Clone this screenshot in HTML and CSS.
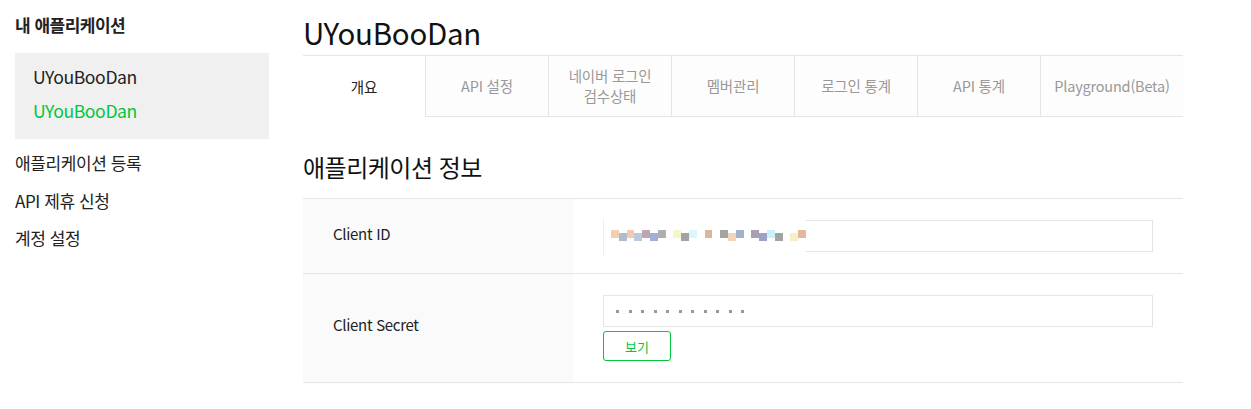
FILE: index.html
```html
<!DOCTYPE html>
<html lang="ko">
<head>
<meta charset="utf-8">
<title>내 애플리케이션</title>
<link rel="stylesheet" href="styles.css">
</head>
<body>
<div class="page">
  <aside class="side">
    <h2 class="side-title">내 애플리케이션</h2>
    <div class="app-box">
      <div class="app-item">UYouBooDan</div>
      <div class="app-item active">UYouBooDan</div>
    </div>
    <ul class="side-links">
      <li>애플리케이션 등록</li>
      <li>API 제휴 신청</li>
      <li>계정 설정</li>
    </ul>
  </aside>
  <main class="main">
    <h1 class="app-title">UYouBooDan</h1>
    <ul class="tabs">
      <li class="tab on">개요</li>
      <li class="tab">API 설정</li>
      <li class="tab">네이버 로그인<br>검수상태</li>
      <li class="tab">멤버관리</li>
      <li class="tab">로그인 통계</li>
      <li class="tab">API 통계</li>
      <li class="tab last">Playground(Beta)</li>
    </ul>
    <h2 class="sec-title">애플리케이션 정보</h2>
    <div class="info">
      <div class="row row-id">
        <div class="label">Client ID</div>
        <div class="value">
          <div class="field">
            <div class="redact">
              <i style="background:#f2c9a6"></i><i style="background:#a8b4c8"></i><i style="background:#f0c8a4"></i><i style="background:#b6c2de"></i><i style="background:#b69ca4"></i><i style="background:#96a8d0"></i><i style="background:#a5a5a5"></i><i style="background:#fff"></i><i style="background:#f6f4c8"></i><i style="background:#999"></i><i style="background:#d8f6f8"></i><i style="background:#fff"></i><i style="background:#d8b090"></i><i style="background:#fff"></i><i style="background:#9a9a9a"></i><i style="background:#f2d0b0"></i><i style="background:#9aa8c6"></i><i style="background:#fff"></i><i style="background:#a096b0"></i><i style="background:#9098c0"></i><i style="background:#c4eefc"></i><i style="background:#999"></i><i style="background:#fff"></i><i style="background:#f6ecc0"></i><i style="background:#e0b090"></i>
            </div>
          </div>
        </div>
      </div>
      <div class="row row-secret">
        <div class="label">Client Secret</div>
        <div class="value">
          <div class="field dots">
            <span></span><span></span><span></span><span></span><span></span><span></span><span></span><span></span><span></span><span></span><span></span>
          </div>
          <button class="btn">보기</button>
        </div>
      </div>
    </div>
  </main>
</div>
</body>
</html>
```
FILE: styles.css
```css
* { box-sizing: border-box; }
html, body { margin: 0; padding: 0; background: #fff; }
body {
  font-family: "Noto Sans CJK KR", "Noto Sans", sans-serif;
  color: #222;
}
ul { list-style: none; margin: 0; padding: 0; }
h1, h2 { margin: 0; font-weight: normal; }

.page { display: flex; padding-left: 15px; }

.side { width: 254px; flex: none; padding-top: 12px; }
.side-title {
  font-size: 17px; font-weight: bold; line-height: 26px; height: 41px;
  color: #222; letter-spacing: -0.5px;
}
.app-box {
  background: #f0f0f0; padding: 7px 18px 0; height: 86px;
}
.app-item { font-size: 17.6px; line-height: 34px; color: #222; letter-spacing: -0.4px; }
.app-item.active { color: #00c73c; }
.side-links { padding-top: 5px; }
.side-links li { font-size: 17px; line-height: 37.5px; color: #222; letter-spacing: -0.4px; }

.main { margin-left: 34px; width: 880px; padding-top: 12px; }
.app-title { font-size: 29.5px; line-height: 40px; height: 43px; color: #111; letter-spacing: -0.3px; }

.tabs {
  display: flex; border-top: 1px solid #e5e5e5; height: 62px;
}
.tab {
  width: 123px; flex: none; height: 61px; display: flex; align-items: center; justify-content: center;
  text-align: center; font-size: 14.5px; line-height: 20px; color: #999; letter-spacing: -0.2px;
  background: #fdfdfd; border-left: 1px solid #e5e5e5; border-bottom: 1px solid #e5e5e5;
}
.tab.on { width: 122px; border-left: 0; border-bottom: 0; background: #fff; color: #222; }
.tab.last { flex: 1; }

.sec-title { font-size: 24px; line-height: 34px; margin-top: 33px; height: 48px; color: #111; letter-spacing: -0.5px; }

.info { border-top: 1px solid #e5e5e5; }
.row { display: flex; border-bottom: 1px solid #e5e5e5; }
.row-id { height: 75px; }
.row-secret { height: 109px; }
.label {
  width: 270px; flex: none; background: #fafafa; padding-left: 30px;
  display: flex; align-items: center; font-size: 15px; color: #222; letter-spacing: -0.3px;
}
.row-id .label { padding-bottom: 6px; }
.row-secret .label { padding-bottom: 8px; }
.value { flex: 1; padding: 21px 0 0 30px; }
.field {
  width: 550px; height: 32px; border: 1px solid #e5e5e5; background: #fff; position: relative;
}
.redact {
  position: absolute; left: -1px; top: -2px; width: 203px; height: 36px; background: #fff;
  display: flex; align-items: center; padding-left: 7px; border-left: 1px solid #eee;
}
.redact i { display: block; width: 8px; height: 8px; opacity: 0.9; }
.redact i:nth-child(odd) { transform: translateY(-3px); }
.dots { display: flex; align-items: center; gap: 9.5px; padding-left: 12px; }
.dots span { width: 3px; height: 3px; background: #999; display: block; }
.btn {
  display: block; margin-top: 4px; width: 68px; height: 30px; border: 1px solid #00c73c; border-radius: 3px;
  background: #fff; color: #00c73c; font-family: inherit; font-size: 13px; padding: 0;
}
```
